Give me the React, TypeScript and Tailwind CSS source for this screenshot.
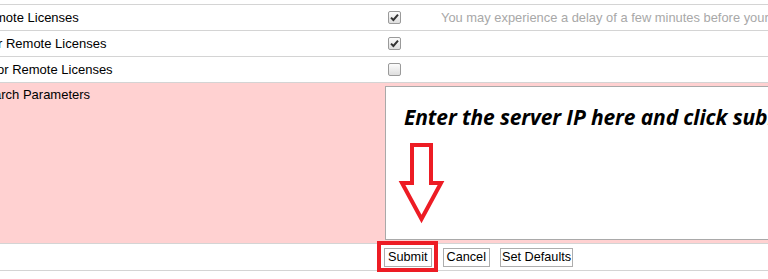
import React from "react";

function Box({ checked }: { checked: boolean }) {
  return (
    <span className="ml-[4px] flex h-[13px] w-[13px] shrink-0 items-center justify-center rounded-[2px] border border-[#9a9a9a] bg-gradient-to-b from-[#fcfcfc] to-[#dedede]">
      {checked && (
        <svg width="9" height="9" viewBox="0 0 9 9">
          <path d="M1 4.6 L3.4 7 L8 1.6" fill="none" stroke="#333" strokeWidth="2" />
        </svg>
      )}
    </span>
  );
}

function Row({ label, offset, children }: { label: string; offset: string; children?: React.ReactNode }) {
  return (
    <div className="flex h-[26px] border-t border-[#d4d4d4]">
      <div className="flex w-[384px] shrink-0 items-center overflow-hidden whitespace-nowrap">
        <span className={offset}>{label}</span>
      </div>
      <div className="flex items-center whitespace-nowrap">{children}</div>
    </div>
  );
}

export default function App() {
  return (
    <div
      className="relative h-[279px] w-[768px] overflow-hidden bg-white text-[13px] leading-[15px] text-black"
      style={{ fontFamily: '"Liberation Sans", Arial, sans-serif' }}
    >
      <div className="pt-[4px]">
        <Row label="mote Licenses" offset="ml-[-5px]">
          <Box checked />
          <span className="ml-[40px] text-[12.9px] text-[#a8a8a8]">
            You may experience a delay of a few minutes before your changes take effect.
          </span>
        </Row>
        <Row label="r Remote Licenses" offset="ml-[-2px]">
          <Box checked />
        </Row>
        <Row label="or Remote Licenses" offset="ml-[-3px]">
          <Box checked={false} />
        </Row>
        <div className="flex h-[161px] border-t border-[#d4d4d4] bg-[#ffd1d1]">
          <div className="w-[384px] shrink-0 overflow-hidden whitespace-nowrap pt-[4px]">
            <span className="ml-[-6px]">arch Parameters</span>
          </div>
          <div className="pt-[3px] pl-[1px]">
            <div className="h-[154px] w-[600px] border border-[#a9a9a9] bg-white pl-[18px] pt-[16px]">
              <div
                className="whitespace-nowrap text-[21px] font-bold italic leading-[28px] tracking-[-0.12px] text-black"
                style={{ fontFamily: '"Open Sans", Lato, sans-serif' }}
              >
                Enter the server IP here and click submit
              </div>
            </div>
          </div>
        </div>
        <div className="flex h-[28px] border-y border-[#d4d4d4]">
          <div className="w-[384px] shrink-0" />
          <div className="flex items-center">
            <button className="h-[19px] border border-[#adadad] bg-white px-[3px] text-[12.7px] leading-[15px]">Submit</button>
            <button className="ml-[11px] h-[19px] border border-[#adadad] bg-white px-[3px] text-[12.7px] leading-[15px]">Cancel</button>
            <button className="ml-[10px] h-[19px] border border-[#adadad] bg-white px-[1px] text-[12.7px] leading-[15px]">Set Defaults</button>
          </div>
        </div>
      </div>

      <div className="pointer-events-none absolute left-[377px] top-[241px] h-[31px] w-[61px] border-[4px] border-[#ed1c24]" />

      <svg className="pointer-events-none absolute left-0 top-0" width="768" height="279" viewBox="0 0 768 279">
        <polygon
          points="412,145 431,145 431,183 441,183 421.5,219 402,183 412,183"
          fill="none"
          stroke="#ed1c24"
          strokeWidth="4"
          strokeLinejoin="miter"
        />
      </svg>
    </div>
  );
}
